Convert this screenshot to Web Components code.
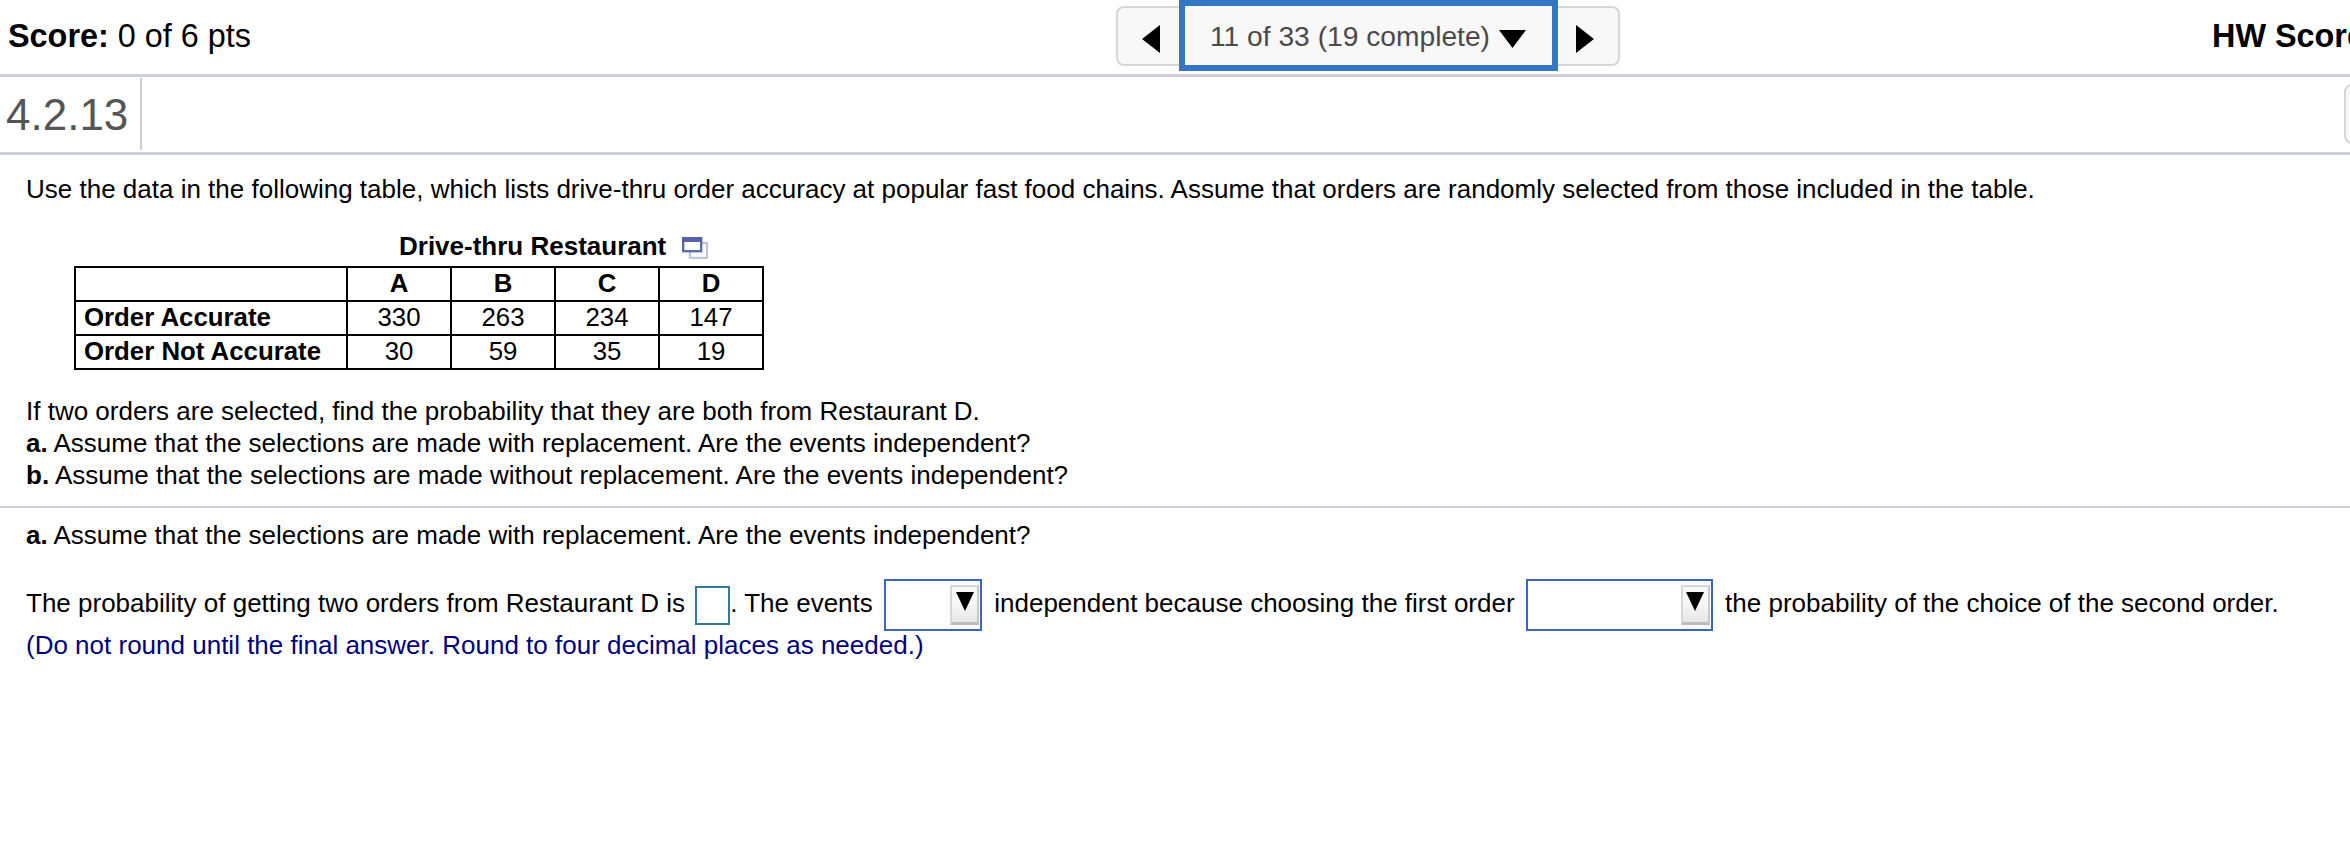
<!DOCTYPE html>
<html>
<head>
<meta charset="utf-8">
<style>
    html, body { margin: 0; padding: 0; background: #fff; overflow: hidden; }
    body { width: 2350px; height: 860px; font-family: "Liberation Sans", Arial, sans-serif; color: #000; }
</style>
</head>
<body>
<hw-header>
    <span slot="score"><b>Score:</b> 0 of 6 pts</span>
    <hw-pager slot="pager">11 of 33 (19 complete)</hw-pager>
    <b slot="total">HW Score</b>
</hw-header>
<question-bar>4.2.13</question-bar>
<question-body>
    <p class="intro">Use the data in the following table, which lists drive-thru order accuracy at popular fast food chains. Assume that orders are randomly selected from those included in the table.</p>
    <data-table></data-table>
    <div class="ask">If two orders are selected, find the probability that they are both from Restaurant D.<br>
    <b>a.</b> Assume that the selections are made with replacement. Are the events independent?<br>
    <b>b.</b> Assume that the selections are made without replacement. Are the events independent?</div>
    <hr>
    <div class="part"><b>a.</b> Assume that the selections are made with replacement. Are the events independent?</div>
    <div class="answer">The probability of getting two orders from Restaurant D is <answer-input></answer-input>. The events <answer-select style="width:98px"></answer-select> independent because choosing the first order <answer-select style="width:187px"></answer-select> the probability of the choice of the second order.</div>
    <div class="hint">(Do not round until the final answer. Round to four decimal places as needed.)</div>
</question-body>

<script>
/**
 * Top row with the score, the question pager and the homework score.
 */
customElements.define('hw-header', class HwHeader extends HTMLElement {
    constructor() {
        super();
        this.attachShadow({ mode: 'open' });
        this.shadowRoot.innerHTML = `
            <style>
                :host {
                    display: grid;
                    grid-template-columns: 1116px 504px 1fr;
                    height: 74px;
                    border-bottom: 3px solid #ccd0de;
                    font-size: 32.4px;
                    overflow: hidden;
                }
                .score { padding: 18px 0 0 8px; line-height: 36px; }
                .total { padding: 18px 0 0 592px; line-height: 36px; white-space: nowrap; overflow: hidden; }
            </style>
            <div class="score"><slot name="score"></slot></div>
            <slot name="pager"></slot>
            <div class="total"><slot name="total"></slot></div>
        `;
    }
});

/**
 * Previous / next buttons round the question selector.
 */
customElements.define('hw-pager', class HwPager extends HTMLElement {
    constructor() {
        super();
        this.attachShadow({ mode: 'open' });
        this.shadowRoot.innerHTML = `
            <style>
                :host {
                    display: flex;
                    box-sizing: border-box;
                    height: 60px;
                    margin-top: 6px;
                    border: 2px solid #d6d6d6;
                    border-radius: 8px;
                    background: #f8f8f8;
                }
                .arrow { flex: 1; display: flex; align-items: center; justify-content: center; padding-top: 6px; box-sizing: border-box; }
                .arrow.prev { padding-left: 6px; }
                .arrow.next { padding-right: 6px; }
                .current {
                    box-sizing: border-box;
                    width: 379px;
                    height: 71px;
                    margin-top: -8px;
                    padding-top: 2px;
                    border: 6px solid #3477c4;
                    display: flex;
                    align-items: center;
                    justify-content: center;
                    gap: 9px;
                    color: #4a4a4a;
                    font-size: 28.2px;
                    white-space: nowrap;
                    background: #f8f8f8;
                }
                .current svg { margin-top: 5px; }
            </style>
            <div class="arrow prev"><svg width="18" height="28" viewBox="0 0 18 28"><path d="M18 0V28L0 14Z"/></svg></div>
            <div class="current"><slot></slot><svg width="27" height="18" viewBox="0 0 27 18"><path d="M0 0H27L13.5 18Z"/></svg></div>
            <div class="arrow next"><svg width="18" height="28" viewBox="0 0 18 28"><path d="M0 0V28L18 14Z"/></svg></div>
        `;
    }
});

/**
 * Row that holds the question number and the tool button cut off at the right edge.
 */
customElements.define('question-bar', class QuestionBar extends HTMLElement {
    constructor() {
        super();
        this.attachShadow({ mode: 'open' });
        this.shadowRoot.innerHTML = `
            <style>
                :host {
                    display: flex;
                    height: 75px;
                    border-bottom: 3px solid #ccd0de;
                    overflow: hidden;
                }
                .num {
                    box-sizing: border-box;
                    width: 142px;
                    height: 72px;
                    margin-top: 1px;
                    padding: 2px 0 0 6px;
                    border-right: 2px solid #ccd0de;
                    color: #555;
                    font-size: 44px;
                    line-height: 70px;
                }
                .tool {
                    box-sizing: border-box;
                    width: 40px;
                    height: 60px;
                    margin: 7px 0 0 auto;
                    transform: translateX(34px);
                    border: 2px solid #d6d6d6;
                    border-radius: 8px;
                    background: #f8f8f8;
                }
            </style>
            <div class="num"><slot></slot></div>
            <div class="tool"></div>
        `;
    }
});

/**
 * Question text area; styles are kept here so slotted text is styled from the light DOM parts.
 */
customElements.define('question-body', class QuestionBody extends HTMLElement {
    constructor() {
        super();
        this.attachShadow({ mode: 'open' });
        this.shadowRoot.innerHTML = `
            <style>
                :host { display: block; font-size: 26px; line-height: 32px; }
                ::slotted(.intro) { margin: 0; padding: 18px 26px 0; }
                ::slotted(data-table) { margin: 24px 0 0 74px; }
                ::slotted(.ask) { padding: 25px 26px 0; }
                ::slotted(hr) { margin: 15px 0 0; border: 0; border-top: 2px solid #ccd0de; }
                ::slotted(.part) { padding: 11px 26px 0; }
                ::slotted(.answer) { padding: 28px 26px 0; white-space: nowrap; }
                ::slotted(.hint) { padding: 0 26px 0; margin-top: -2px; color: #00007f; }
            </style>
            <slot></slot>
        `;
    }
});

/**
 * Data table with its caption and the small copy icon.
 */
customElements.define('data-table', class DataTable extends HTMLElement {
    _rows = [
        ['Order Accurate', 330, 263, 234, 147],
        ['Order Not Accurate', 30, 59, 35, 19]
    ];

    constructor() {
        super();
        this.attachShadow({ mode: 'open' });
        const rows = this._rows.map(r => `<tr><th>${r[0]}</th>${r.slice(1).map(v => `<td>${v}</td>`).join('')}</tr>`).join('');
        this.shadowRoot.innerHTML = `
            <style>
                :host { display: block; width: 691px; }
                .title {
                    display: flex;
                    align-items: center;
                    height: 34px;
                    margin-bottom: 3px;
                    padding-left: 325px;
                    font-weight: bold;
                    gap: 16px;
                    white-space: nowrap;
                }
                .title svg { margin-top: 3px; }
                table { border-collapse: collapse; table-layout: fixed; width: 690px; line-height: 30px; font-size: 25.8px; }
                th, td { border: 2px solid #000; padding: 0; height: 32px; text-align: center; font-weight: normal; vertical-align: top; }
                thead th { font-weight: bold; }
                tbody th { font-weight: bold; text-align: left; padding-left: 8px; }
                col.first { width: 272px; }
            </style>
            <div class="title">Drive-thru Restaurant
                <svg width="26" height="22" viewBox="0 0 26 22"><rect x="8" y="6" width="17" height="15" fill="none" stroke="#c0c6de" stroke-width="2.4"/><rect x="1.2" y="1.2" width="18" height="13" fill="#fff" stroke="#5a6cae" stroke-width="2.4"/><rect x="0" y="0" width="20" height="5" fill="#5262a8"/></svg>
            </div>
            <table>
                <colgroup><col class="first"><col><col><col><col></colgroup>
                <thead><tr><th></th><th>A</th><th>B</th><th>C</th><th>D</th></tr></thead>
                <tbody>${rows}</tbody>
            </table>
        `;
    }
});

/**
 * Empty numeric answer box.
 */
customElements.define('answer-input', class AnswerInput extends HTMLElement {
    constructor() {
        super();
        this.attachShadow({ mode: 'open' });
        this.shadowRoot.innerHTML = `
            <style>
                :host {
                    display: inline-block;
                    box-sizing: border-box;
                    width: 35px;
                    height: 39px;
                    margin: 0 0 0 3px;
                    border: 2px solid #2f7a9e;
                    vertical-align: middle;
                }
            </style>
        `;
    }
});

/**
 * Empty drop-down answer box with its arrow button.
 */
customElements.define('answer-select', class AnswerSelect extends HTMLElement {
    constructor() {
        super();
        this.attachShadow({ mode: 'open' });
        this.shadowRoot.innerHTML = `
            <style>
                :host {
                    display: inline-flex;
                    box-sizing: border-box;
                    height: 52px;
                    margin: 0 5px 0 4px;
                    padding: 4px 1px 4px 0;
                    justify-content: flex-end;
                    align-items: stretch;
                    border: 2px solid #3b66c0;
                    vertical-align: middle;
                }
                .btn {
                    box-sizing: border-box;
                    width: 29px;
                    display: flex;
                    justify-content: center;
                    padding-top: 5px;
                    border: 2px solid #d8d8d8;
                    border-bottom: 3px solid #bdbdbd;
                    border-right-color: #c8c8c8;
                    background: linear-gradient(#f8f8f8 40%, #e6e6e6);
                }
            </style>
            <div class="btn"><svg width="18" height="19" viewBox="0 0 18 19"><path d="M0 0H18L9 19Z"/></svg></div>
        `;
    }
});
</script>
</body>
</html>
